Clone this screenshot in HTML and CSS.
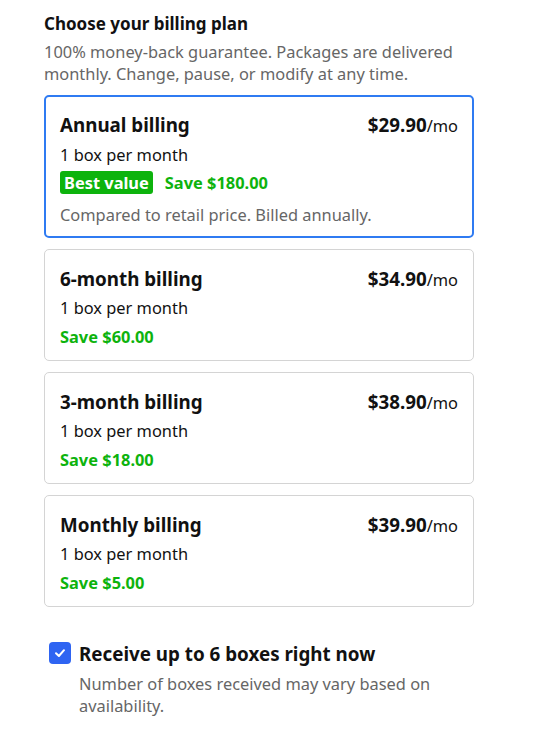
FILE: index.html
```html
<!DOCTYPE html>
<html>
<head>
<meta charset="utf-8">
<link rel="stylesheet" href="styles.css">
</head>
<body>
<div class="page">
  <h2 class="title">Choose your billing plan</h2>
  <p class="intro">100% money-back guarantee. Packages are delivered monthly. Change, pause, or modify at any time.</p>
  <div class="plans">
    <div class="plan selected">
      <div class="plan-head"><span class="plan-name">Annual billing</span><span class="price"><b>$29.90</b>/mo</span></div>
      <div class="plan-sub">1 box per month</div>
      <div class="save-row"><span class="badge">Best value</span><span class="save">Save $180.00</span></div>
      <div class="note">Compared to retail price. Billed annually.</div>
    </div>
    <div class="plan">
      <div class="plan-head"><span class="plan-name">6-month billing</span><span class="price"><b>$34.90</b>/mo</span></div>
      <div class="plan-sub">1 box per month</div>
      <div class="save-row"><span class="save">Save $60.00</span></div>
    </div>
    <div class="plan">
      <div class="plan-head"><span class="plan-name">3-month billing</span><span class="price"><b>$38.90</b>/mo</span></div>
      <div class="plan-sub">1 box per month</div>
      <div class="save-row"><span class="save">Save $18.00</span></div>
    </div>
    <div class="plan">
      <div class="plan-head"><span class="plan-name">Monthly billing</span><span class="price"><b>$39.90</b>/mo</span></div>
      <div class="plan-sub">1 box per month</div>
      <div class="save-row"><span class="save">Save $5.00</span></div>
    </div>
  </div>
  <div class="opt">
    <span class="check"><svg width="14" height="14" viewBox="0 0 14 14"><path d="M3 7.2 L5.9 10 L11 4.2" fill="none" stroke="#fff" stroke-width="2" stroke-linecap="round" stroke-linejoin="round"/></svg></span>
    <div class="opt-text">
      <div class="opt-label">Receive up to 6 boxes right now</div>
      <div class="opt-note">Number of boxes received may vary based on availability.</div>
    </div>
  </div>
</div>
</body>
</html>
```
FILE: styles.css
```css
html, body { margin: 0; padding: 0; background: #fff; }
body { font-family: "Noto Sans", "Open Sans", sans-serif; color: #111; }
.page { width: 430px; padding: 11px 0 0 44px; }
.title { font-size: 17px; font-weight: 700; margin: 0; line-height: 26px; color: #111; }
.intro { font-size: 16.4px; line-height: 22px; color: #666; margin: 4px 0 0; }
.plans { display: flex; flex-direction: column; gap: 11px; margin-top: 10px; }
.plan { border: 1px solid #d4d4d4; border-radius: 5px; padding: 16px 15px 12px; }
.plan.selected { border: 2px solid #2f7bf2; padding: 15px 14px 10px; }
.plan-head { display: flex; justify-content: space-between; align-items: baseline; line-height: 26px; }
.plan-name { font-size: 18.8px; font-weight: 700; }
.price { font-size: 16.4px; color: #111; }
.price b { font-size: 18.8px; font-weight: 700; }
.plan-sub { font-size: 16.4px; line-height: 22px; margin-top: 4px; }
.selected .plan-sub { margin-top: 5px; }
.save-row { display: flex; align-items: center; gap: 12px; margin-top: 5px; height: 24px; }
.selected .save-row { margin-top: 4px; }
.badge { background: #0db30d; color: #fff; font-weight: 700; font-size: 16.4px; line-height: 23px; padding: 0 4px; border-radius: 3px; }
.save { color: #0db30d; font-weight: 700; font-size: 16.4px; }
.note { font-size: 16.4px; line-height: 22px; color: #666; margin-top: 10px; }
.opt { display: flex; gap: 8px; margin-top: 35px; padding-left: 5px; }
.check { width: 22px; height: 22px; border-radius: 4px; background: #2e64f2; display: flex; align-items: center; justify-content: center; margin-top: 0; flex: none; }
.opt-label { font-size: 18.8px; font-weight: 700; line-height: 24px; }
.opt-note { font-size: 16.4px; line-height: 22px; color: #666; margin-top: 7px; }
```
